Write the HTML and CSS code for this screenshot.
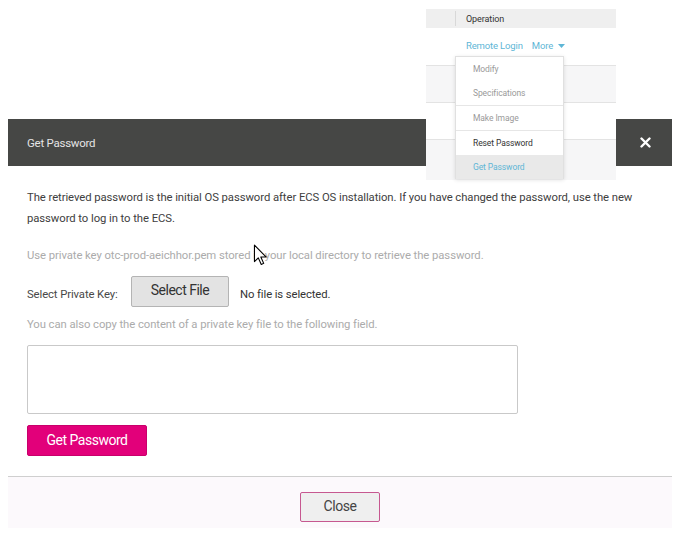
FILE: index.html
```html
<!DOCTYPE html>
<html>
<head>
<meta charset="utf-8">
<link rel="stylesheet" href="styles.css">
</head>
<body>
<div class="page">
  <div class="dialog">
    <div class="dlg-head">
      <span class="dlg-title">Get Password</span>
      <svg class="dlg-x" width="11" height="11" viewBox="0 0 11 11"><path d="M1.5 1.5 L9.5 9.5 M9.5 1.5 L1.5 9.5" stroke="#fff" stroke-width="2.4" stroke-linecap="round"/></svg>
    </div>
    <div class="dlg-body">
      <p class="txt">The retrieved password is the initial OS password after ECS OS installation. If you have changed the password, use the new password to log in to the ECS.</p>
      <p class="hint hint-key">Use private key otc-prod-aeichhor.pem stored in your local directory to retrieve the password.</p>
      <div class="file-row">
        <span class="lbl">Select Private Key:</span>
        <button class="btn-file">Select File</button>
        <span class="nofile">No file is selected.</span>
      </div>
      <p class="hint hint-copy">You can also copy the content of a private key file to the following field.</p>
      <textarea class="keybox"></textarea>
      <button class="btn-primary">Get Password</button>
    </div>
    <div class="dlg-foot">
      <button class="btn-close">Close</button>
    </div>
  </div>

  <div class="bgtable">
    <div class="thead"><span class="th-blank"></span><span class="th">Operation</span></div>
    <div class="row row-links"><span class="links"><span class="lnk">Remote Login</span><span class="lnk">More <svg class="caret" width="7" height="4" viewBox="0 0 7 4"><path d="M0 0 L7 0 L3.5 4 Z" fill="#5eb6d6"/></svg></span></span></div>
    <div class="row row-alt"></div>
    <div class="row"></div>
    <div class="row row-alt row-last"></div>
    <ul class="menu">
      <li class="dis">Modify</li>
      <li class="dis sep">Specifications</li>
      <li class="dis sep">Make Image</li>
      <li>Reset Password</li>
      <li class="active">Get Password</li>
    </ul>
  </div>

  <svg class="cursor" width="15" height="22" viewBox="0 0 13 20"><path d="M1 1 L1 16 L4.5 12.6 L7.2 18.6 L9.4 17.6 L6.8 11.8 L11.6 11.8 Z" fill="#fff" stroke="#000" stroke-width="1" stroke-linejoin="round"/></svg>
</div>
</body>
</html>
```
FILE: styles.css
```css
* { box-sizing: border-box; }
html, body { margin: 0; padding: 0; background: #fff; }
body { font-family: Roboto, "Liberation Sans", sans-serif; color: #333; }
.page { position: relative; width: 682px; height: 533px; padding: 119px 10px 0 8px; }

.dialog { width: 664px; display: flex; flex-direction: column; }
.dlg-head { height: 47px; background: #464745; display: flex; align-items: center; justify-content: space-between; padding: 0 21px 0 19px; }
.dlg-title { color: #e4e4e4; font-size: 11.5px; letter-spacing: -0.25px; }
.dlg-x { display: block; }

.dlg-body { padding: 21px 19px 20px 19px; display: flex; flex-direction: column; align-items: flex-start; border-bottom: 1px solid #cfcfcf; }
.txt { margin: 0; font-size: 11.3px; letter-spacing: -0.07px; line-height: 21px; color: #404040; }
.hint { margin: 0; font-size: 11.3px; letter-spacing: -0.07px; line-height: 21px; color: #ababab; }
.hint-key { margin-top: 16px; }
.file-row { margin-top: 10px; display: flex; align-items: center; height: 31px; }
.lbl { font-size: 11.3px; letter-spacing: -0.1px; color: #484848; width: 104px; padding-top: 5px; }
.btn-file { width: 98px; height: 31px; background: #e3e3e3; border: 1px solid #b4b4b4; border-radius: 2px; font-family: inherit; font-size: 14px; letter-spacing: -0.5px; color: #333; padding: 0 0 3px; }
.nofile { margin-left: 11px; font-size: 11.3px; letter-spacing: -0.1px; color: #333; padding-top: 5px; }
.hint-copy { margin-top: 7px; }
.keybox { margin-top: 10px; width: 491px; height: 69px; border: 1px solid #c9c9c9; border-radius: 2px; resize: none; display: block; }
.btn-primary { margin-top: 11px; width: 120px; height: 31px; background: #e2007a; border: 1px solid #c8006b; border-radius: 2px; color: #fff; font-family: inherit; font-size: 14px; letter-spacing: -0.5px; padding: 0 0 2px; }

.dlg-foot { height: 51px; background: #fcf9fc; display: flex; justify-content: center; align-items: flex-start; padding-top: 15px; }
.btn-close { width: 80px; height: 30px; background: #efefef; border: 1px solid #c65890; border-radius: 2px; font-family: inherit; font-size: 14px; letter-spacing: -0.4px; color: #444; padding: 0 0 2px; }

/* background table fragment visible behind the dialog */
.bgtable { position: absolute; left: 426px; top: 9px; width: 190px; background: #fff; font-size: 9px; }
.thead { height: 19px; background: #efefef; display: flex; align-items: center; }
.th-blank { width: 30px; height: 15px; border-right: 1px solid #d8d8d8; }
.th { padding-left: 10px; color: #333; letter-spacing: -0.1px; }
.row { height: 37px; border-top: 1px solid #e3e3e3; }
.row-links { height: 37px; border-top: none; padding: 12px 0 0 40px; }
.row-alt { background: #f6f6f7; }
.row-last { height: 41px; }
.links { display: flex; gap: 9px; }
.lnk { color: #5eb6d6; font-size: 9.5px; letter-spacing: -0.15px; display: flex; align-items: center; gap: 3px; }
.caret { display: block; margin-left: 2px; }

.menu { position: absolute; left: 29px; top: 47px; width: 109px; margin: 0; padding: 0; list-style: none; background: #fff; border: 1px solid #e0e0e0; border-bottom: none; box-shadow: 0 1px 4px rgba(0,0,0,0.12); }
.menu li { height: 24px; line-height: 24px; padding-left: 17px; color: #333; font-size: 8.5px; letter-spacing: -0.1px; }
.menu li.dis { color: #9a9a9a; }
.menu li.sep { border-bottom: 1px solid #e6e6e6; height: 25px; }
.menu li.active { background: #e9e9e9; color: #5eb6d6; }

.cursor { position: absolute; left: 253px; top: 244px; }
```
